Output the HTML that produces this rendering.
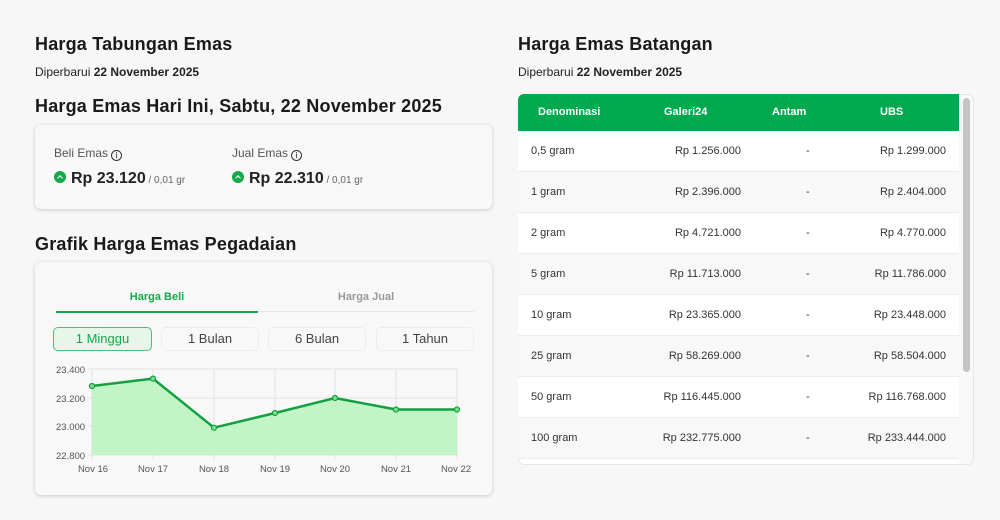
<!DOCTYPE html>
<html><head><meta charset="utf-8"><style>
*{margin:0;padding:0;box-sizing:border-box}
body{width:1000px;height:520px;background:#f7f7f7;font-family:"Liberation Sans",sans-serif;color:#222;position:relative;overflow:hidden}
.a{position:absolute;white-space:nowrap}
h2{position:absolute;font-size:18px;font-weight:bold;color:#1a1a1a;white-space:nowrap;letter-spacing:0.2px}
.sub{font-size:12px;color:#222}
.card{position:absolute;background:#f8f8f8;border-radius:6px;box-shadow:0 1px 4px rgba(0,0,0,.18)}
.ic{display:inline-block;width:11px;height:11px;border:1.3px solid #333;border-radius:50%;font-size:8px;text-align:center;line-height:9px;font-weight:bold;vertical-align:-1px;margin-left:3px}
.up{display:inline-block;width:12px;height:12px;border-radius:50%;background:#14a84a;vertical-align:0px;position:relative;margin-right:5px}
.up:after{content:"";position:absolute;left:3.5px;top:4.5px;width:3px;height:3px;border-left:1.5px solid #fff;border-top:1.5px solid #fff;transform:rotate(45deg)}
.btn{position:absolute;top:327px;height:24px;border:1px solid #ececec;border-radius:5px;font-size:13px;color:#444;text-align:center;line-height:22px;background:#f8f8f8}
.row{position:absolute;left:518px;width:441px;height:41px;font-size:11px;color:#333;border-bottom:1px solid #ececec}
.row span{position:absolute;top:14px}
</style></head><body>
<h2 style="left:35px;top:34px">Harga Tabungan Emas</h2>
<div class="a sub" style="left:35px;top:65px">Diperbarui <b>22 November 2025</b></div>
<h2 style="left:35px;top:96px">Harga Emas Hari Ini, Sabtu, 22 November 2025</h2>
<div class="card" style="left:35px;top:125px;width:457px;height:84px"></div>
<div class="a" style="left:54px;top:146px;font-size:12px;color:#555">Beli Emas<span class="ic">i</span></div>
<div class="a" style="left:232px;top:146px;font-size:12px;color:#555">Jual Emas<span class="ic">i</span></div>
<div class="a" style="left:54px;top:170px;font-size:16px;font-weight:bold;color:#222"><span class="up"></span>Rp 23.120<span style="font-size:10px;color:#666;font-weight:normal"> / 0,01 gr</span></div>
<div class="a" style="left:232px;top:170px;font-size:16px;font-weight:bold;color:#222"><span class="up"></span>Rp 22.310<span style="font-size:10px;color:#666;font-weight:normal"> / 0,01 gr</span></div>

<h2 style="left:35px;top:234px">Grafik Harga Emas Pegadaian</h2>
<div class="card" style="left:35px;top:262px;width:457px;height:233px"></div>
<div class="a" style="left:56px;top:291px;width:202px;text-align:center;font-size:11px;font-weight:bold;color:#14a84a">Harga Beli</div>
<div class="a" style="left:258px;top:291px;width:216px;text-align:center;font-size:11px;font-weight:bold;color:#999">Harga Jual</div>
<div class="a" style="left:56px;top:311px;width:418px;height:1px;background:#e6e6e6"></div>
<div class="a" style="left:56px;top:311px;width:202px;height:2px;background:#14a84a"></div>
<div class="btn" style="left:53px;width:99px;border-color:#4cbf74;background:#e6f6ea;color:#14a84a">1 Minggu</div>
<div class="btn" style="left:161px;width:98px">1 Bulan</div>
<div class="btn" style="left:268px;width:98px">6 Bulan</div>
<div class="btn" style="left:376px;width:98px">1 Tahun</div>
<svg class="a" style="left:0;top:0" width="500" height="520">
<g stroke="#e2e2e2" stroke-width="1">
<line x1="88" y1="369" x2="457" y2="369"/><line x1="88" y1="398" x2="457" y2="398"/><line x1="88" y1="426" x2="457" y2="426"/><line x1="88" y1="455" x2="457" y2="455"/>
<line x1="92" y1="369" x2="92" y2="460"/><line x1="153" y1="369" x2="153" y2="460"/><line x1="214" y1="369" x2="214" y2="460"/><line x1="275" y1="369" x2="275" y2="460"/><line x1="335" y1="369" x2="335" y2="460"/><line x1="396" y1="369" x2="396" y2="460"/><line x1="457" y1="369" x2="457" y2="460"/>
</g>
<path d="M92 386 L153 378.6 L214 427.7 L275 413 L335 398 L396 409.5 L457 409.5 L457 455 L92 455Z" fill="#b8f5bd" opacity=".85"/>
<path d="M92 386 L153 378.6 L214 427.7 L275 413 L335 398 L396 409.5 L457 409.5" fill="none" stroke="#14a040" stroke-width="2.5"/>
<g fill="#7be08a" stroke="#14a040" stroke-width="1.2"><circle cx="92" cy="386" r="2.5"/><circle cx="153" cy="378.6" r="2.5"/><circle cx="214" cy="427.7" r="2.5"/><circle cx="275" cy="413" r="2.5"/><circle cx="335" cy="398" r="2.5"/><circle cx="396" cy="409.5" r="2.5"/><circle cx="457" cy="409.5" r="2.5"/></g>
<g font-family="Liberation Sans" font-size="9.5" fill="#555">
<text x="56" y="373">23.400</text><text x="56" y="402">23.200</text><text x="56" y="430">23.000</text><text x="56" y="459">22.800</text>
<g text-anchor="middle"><text x="93" y="472">Nov 16</text><text x="153" y="472">Nov 17</text><text x="214" y="472">Nov 18</text><text x="275" y="472">Nov 19</text><text x="335" y="472">Nov 20</text><text x="396" y="472">Nov 21</text><text x="456" y="472">Nov 22</text></g>
</g></svg>

<h2 style="left:518px;top:34px">Harga Emas Batangan</h2>
<div class="a sub" style="left:518px;top:65px">Diperbarui <b>22 November 2025</b></div>
<div class="a" style="left:518px;top:94px;width:456px;height:371px;background:#fff;border:1px solid #e6e6e6;border-radius:6px;overflow:hidden"></div>
<div class="a" style="left:959px;top:95px;width:14px;height:369px;background:#f8f8f8;border-radius:0 6px 6px 0"></div>
<div class="a" style="left:963px;top:98px;width:7px;height:274px;background:#c4c4c4;border-radius:4px"></div>
<div class="a" style="left:518px;top:94px;width:441px;height:37px;background:#00a84f;border-radius:6px 0 0 0;color:#fff;font-size:11px;font-weight:bold">
<span class="a" style="left:20px;top:12px">Denominasi</span><span class="a" style="left:146px;top:12px">Galeri24</span><span class="a" style="left:254px;top:12px">Antam</span><span class="a" style="left:362px;top:12px">UBS</span></div>
<div class="row" style="top:131px;background:#fff"><span style="left:13px">0,5 gram</span><span style="right:218px">Rp 1.256.000</span><span style="left:288px">-</span><span style="right:13px">Rp 1.299.000</span></div>
<div class="row" style="top:172px;background:#f8f8f8"><span style="left:13px">1 gram</span><span style="right:218px">Rp 2.396.000</span><span style="left:288px">-</span><span style="right:13px">Rp 2.404.000</span></div>
<div class="row" style="top:213px;background:#fff"><span style="left:13px">2 gram</span><span style="right:218px">Rp 4.721.000</span><span style="left:288px">-</span><span style="right:13px">Rp 4.770.000</span></div>
<div class="row" style="top:254px;background:#f8f8f8"><span style="left:13px">5 gram</span><span style="right:218px">Rp 11.713.000</span><span style="left:288px">-</span><span style="right:13px">Rp 11.786.000</span></div>
<div class="row" style="top:295px;background:#fff"><span style="left:13px">10 gram</span><span style="right:218px">Rp 23.365.000</span><span style="left:288px">-</span><span style="right:13px">Rp 23.448.000</span></div>
<div class="row" style="top:336px;background:#f8f8f8"><span style="left:13px">25 gram</span><span style="right:218px">Rp 58.269.000</span><span style="left:288px">-</span><span style="right:13px">Rp 58.504.000</span></div>
<div class="row" style="top:377px;background:#fff"><span style="left:13px">50 gram</span><span style="right:218px">Rp 116.445.000</span><span style="left:288px">-</span><span style="right:13px">Rp 116.768.000</span></div>
<div class="row" style="top:418px;background:#f8f8f8"><span style="left:13px">100 gram</span><span style="right:218px">Rp 232.775.000</span><span style="left:288px">-</span><span style="right:13px">Rp 233.444.000</span></div>
</body></html>
